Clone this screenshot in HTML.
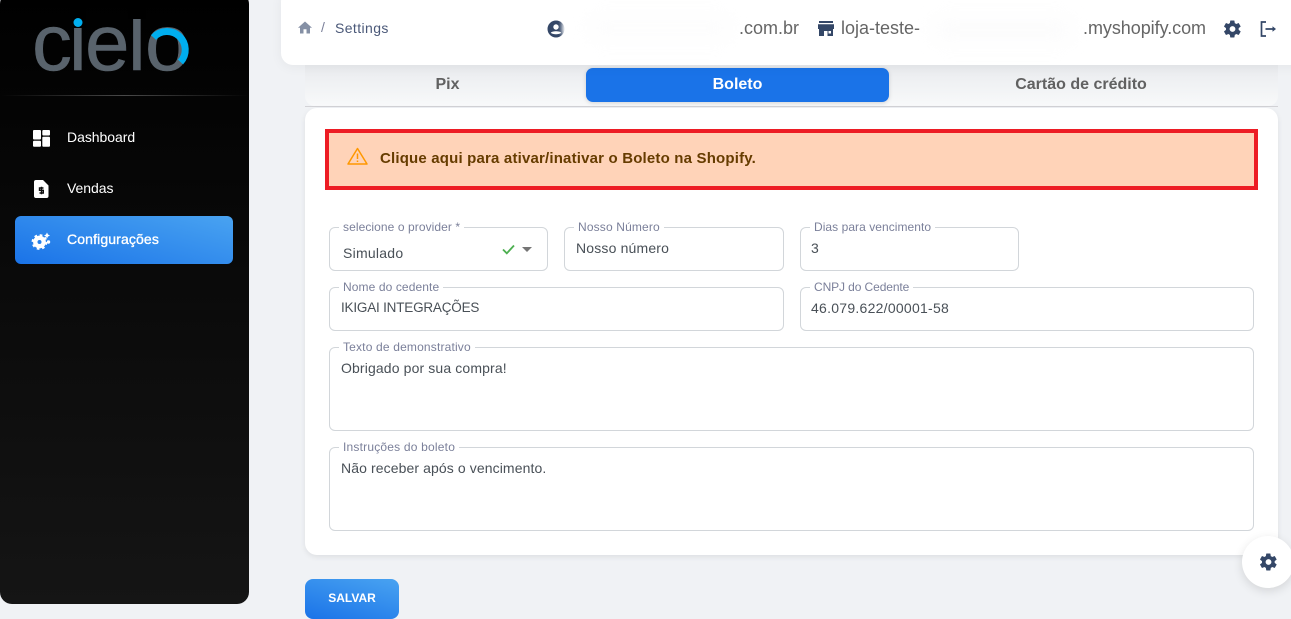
<!DOCTYPE html>
<html lang="pt-BR"><head><meta charset="utf-8"><title>Settings</title>
<style>
html,body{margin:0;padding:0;width:1291px;height:619px;overflow:hidden;background:#f0f2f5;font-family:"Liberation Sans",sans-serif}
.a{position:absolute;white-space:nowrap}
#side{left:0;top:-8px;width:249px;height:612px;border-radius:12px;background:linear-gradient(180deg,#000 0%,#151515 100%)}
#div{left:0;top:95px;width:249px;height:1px;background:linear-gradient(90deg,rgba(255,255,255,0),rgba(255,255,255,.28),rgba(255,255,255,0))}
.nav{color:#fff;font-size:14px;line-height:20px;left:67px;letter-spacing:-.04px}
#act{left:15px;top:216px;width:218px;height:48px;border-radius:6px;background:linear-gradient(195deg,#49a3f1,#1a73e8)}
#head{left:281px;top:-10px;width:1030px;height:75px;background:#fff;border-radius:12px;box-shadow:0 2px 12px rgba(0,0,0,.05);z-index:3}
.h{z-index:4}
#tabs{left:305px;top:65px;width:973px;height:41px;background:linear-gradient(180deg,#e9ebee,#f8f9fa);border-radius:0 0 10px 10px}
#line{left:305px;top:106px;width:973px;height:1px;background:#d2d2d6}
#on{left:586px;top:68px;width:303px;height:34px;border-radius:7px;background:#1a73e8;box-shadow:0 1px 4px rgba(0,0,0,.15)}
.tab{top:75px;line-height:19px;font-size:16px;font-weight:bold;color:#616161;transform:translateX(-50%)}
#card{left:305px;top:108px;width:973px;height:447px;background:#fff;border-radius:12px;box-shadow:0 2px 6px rgba(0,0,0,.08)}
#alert{left:325px;top:129px;width:925px;height:53px;border:4px solid #ed1c24;background:#ffd3b8}
#atxt{left:380px;top:150px;font-size:15px;line-height:18px;font-weight:bold;color:#663c00;letter-spacing:.18px}
.f{border:1px solid #d2d6da;border-radius:6px;box-sizing:border-box;background:#fff}
.l{font-size:12px;line-height:14px;color:#7b809a;background:#fff;padding:0 4px}
.v{font-size:14px;line-height:20px;color:#495057}
#save{left:305px;top:579px;width:94px;height:40px;border-radius:8px;background:linear-gradient(195deg,#49a3f1,#1a73e8);color:#fff;font-size:12px;font-weight:bold;line-height:38px;text-align:center}
#fab{left:1242px;top:536px;width:52px;height:52px;border-radius:50%;background:#fff;box-shadow:0 3px 10px rgba(0,0,0,.12)}
svg{position:absolute;display:block;overflow:visible}
</style></head><body>
<div class="a" id="side"></div>
<svg style="left:0;top:0;font-family:'Liberation Sans',sans-serif" width="249" height="90">
<g font-size="80" fill="#59636c" stroke="#59636c" stroke-width=".5">
<text x="32" y="70">c</text>
<text x="69" y="70">i</text>
<text x="85" y="70">e</text>
<text x="128" y="70">l</text>
<text x="145" y="70">o</text>
</g>
<rect x="70" y="8" width="16" height="20" fill="#000"/>
<rect x="128" y="8" width="18" height="11" fill="#000"/>
<circle cx="78" cy="22.500" r="4.500" fill="#00aeef"/>
<path d="M153.500 37.500A18 18 0 1 1 180.500 62" fill="none" stroke="#00aeef" stroke-width="7"/>
</svg>
<div class="a" id="div"></div>
<div class="a" id="act"></div>
<svg style="left:33px;top:130px" width="17" height="17" viewBox="0 0 17 17" fill="#fff"><rect width="8" height="9.500" rx="1"/><rect x="9.300" width="7.700" height="5.500" rx="1"/><rect y="10.800" width="8" height="6" rx="1"/><rect x="9.300" y="6.800" width="7.700" height="10" rx="1"/></svg>
<div class="a nav" style="top:127px">Dashboard</div>
<svg style="left:34px;top:180px" width="15" height="18" viewBox="0 0 15 18"><path d="M2 0H9L14.500 5.500V16A2 2 0 0 1 12.500 18H2A2 2 0 0 1 0 16V2A2 2 0 0 1 2 0Z" fill="#fff"/><path d="M9.500 8H5.500V10.300H9.300V13H5.500M7.500 6.800V14.200" fill="none" stroke="#111" stroke-width="1.400"/></svg>
<div class="a nav" style="top:178px">Vendas</div>
<svg style="left:32px;top:232px" width="19" height="18" viewBox="0 0 19 18" fill="#fff"><circle cx="7.500" cy="10" r="4.200" fill="none" stroke="#fff" stroke-width="4.400"/><circle cx="7.500" cy="10" r="7" fill="none" stroke="#fff" stroke-width="1.800" stroke-dasharray="2.700 2.800"/><path d="M15 0.500L16 2.500L18 3.500L16 4.500L15 6.500L14 4.500L12 3.500L14 2.500Z"/><circle cx="16.500" cy="10" r="1.700"/></svg>
<div class="a nav" style="top:229px;-webkit-text-stroke:.35px #fff;letter-spacing:.13px">Configurações</div>

<div class="a" id="tabs"></div>
<div class="a" id="line"></div>
<div class="a" id="on"></div>
<div class="a tab" style="left:447.500px">Pix</div>
<div class="a tab" style="left:737.500px;color:#fff">Boleto</div>
<div class="a tab" style="left:1081px">Cartão de crédito</div>

<div class="a" id="head"></div>
<svg class="h" style="left:298px;top:21px;z-index:4" width="14" height="13" viewBox="0 0 14 13"><path d="M5.500 12.500V8.300H8.500V12.500H12V6.800H14L7 .5 0 6.800H2V12.500Z" fill="#8590a5"/></svg>
<div class="a h" style="left:321px;top:18px;font-size:14px;line-height:18px;color:#7b809a">/</div>
<div class="a h" style="left:335px;top:19px;font-size:14px;line-height:18px;color:#4a5878;letter-spacing:.4px">Settings</div>
<svg style="left:547px;top:20px;z-index:4" width="18" height="18" viewBox="0 0 18 18"><circle cx="9" cy="9" r="8.500" fill="#344767"/><circle cx="9" cy="7" r="2.700" fill="#fff"/><path d="M3.800 12.800C5 10.800 13 10.800 14.200 12.800C12.500 14.800 5.500 14.800 3.800 12.800Z" fill="#fff"/></svg>
<div class="a h" style="left:562px;top:16px;width:8px;height:24px;background:#fff;filter:blur(2px);border-radius:50%;z-index:4"></div>
<div class="a h" style="left:590px;top:18px;width:140px;height:20px;background:#f7f7f8;filter:blur(10px);opacity:.35;z-index:4"></div>
<div class="a h" style="left:739px;top:18px;font-size:18px;line-height:21px;color:#666;z-index:4">.com.br</div>
<svg style="left:818px;top:21px;z-index:4" width="16" height="15" viewBox="0 0 16 15"><path d="M1 0H15V2H1ZM0 3.200H16L16 8H15V15H9.500V10H6V15H1V8H0ZM10.500 10V12.500H13V10Z" fill="#344767" fill-rule="evenodd"/></svg>
<div class="a h" style="left:841px;top:18px;font-size:18px;line-height:21px;color:#666;z-index:4">loja-teste-</div>
<div class="a h" style="left:935px;top:20px;width:135px;height:20px;background:#f4f4f5;filter:blur(10px);opacity:.35;z-index:4"></div>
<div class="a h" style="left:1083px;top:18px;font-size:18px;line-height:21px;color:#666;z-index:4;letter-spacing:-.05px">.myshopify.com</div>
<svg style="left:1224px;top:20px;z-index:4" width="17" height="18" viewBox="1.800 1.500 20.400 21"><path fill="#344767" d="M19.400 13c.04-.32.060-.66.060-1s-.02-.68-.07-1l2.160-1.680a.5.5 0 0 0 .12-.64l-2.050-3.540a.5.5 0 0 0-.62-.22l-2.550 1.020a7.500 7.500 0 0 0-1.730-1l-.38-2.710a.5.5 0 0 0-.5-.43H9.750a.5.500 0 0 0-.5.430l-.38 2.710c-.62.26-1.200.6-1.730 1L4.600 4.920a.5.500 0 0 0-.62.220L1.930 8.680a.5.500 0 0 0 .12.640L4.210 11c-.05.32-.08.67-.08 1s.02.68.07 1l-2.160 1.680a.5.500 0 0 0-.12.640l2.050 3.540c.13.23.4.31.62.220l2.550-1.020c.53.4 1.110.74 1.730 1l.38 2.710c.05.25.26.430.5.430h4.100c.25 0 .46-.18.5-.43l.38-2.710c.62-.26 1.200-.6 1.730-1l2.550 1.020c.23.090.49 0 .62-.22l2.050-3.540a.5.500 0 0 0-.12-.64ZM12 15.500a3.500 3.500 0 1 1 0-7 3.500 3.500 0 0 1 0 7Z"/></svg>
<svg style="left:1260px;top:21px;z-index:4" width="17" height="16" viewBox="0 0 17 16" fill="none" stroke="#344767" stroke-width="1.700"><path d="M6 1H1.500V15H6M5.500 8H14"/><path d="M12.500 5.300L16 8 12.500 10.700Z" fill="#344767" stroke="none"/></svg>

<div class="a" id="card"></div>
<div class="a" id="alert"></div>
<svg style="left:347px;top:147px" width="21" height="18" viewBox="0 0 21 18" fill="none" stroke="#ff9800" stroke-width="1.500"><path d="M10.500 1.500L20 17H1Z" stroke-linejoin="round"/><path d="M10.500 6.500V12M10.500 13.500V15"/></svg>
<div class="a" id="atxt">Clique aqui para ativar/inativar o Boleto na Shopify.</div>

<div class="a f" style="left:329px;top:227px;width:219px;height:44px"></div>
<div class="a l" style="left:339px;top:220px;letter-spacing:.08px">selecione o provider *</div>
<div class="a v" style="left:343px;top:243px;letter-spacing:.25px">Simulado</div>
<svg style="left:502px;top:244px" width="13" height="11" viewBox="0 0 13 11"><path d="M1 5.500L4.800 9.300 12 1.500" fill="none" stroke="#4caf50" stroke-width="1.800"/></svg>
<svg style="left:522px;top:247px" width="10" height="5" viewBox="0 0 10 5"><path d="M0 0H10L5 5Z" fill="#757575"/></svg>

<div class="a f" style="left:564px;top:227px;width:220px;height:44px"></div>
<div class="a l" style="left:574px;top:220px;letter-spacing:.15px">Nosso Número</div>
<div class="a v" style="left:576px;top:238px;letter-spacing:.17px">Nosso número</div>

<div class="a f" style="left:800px;top:227px;width:219px;height:44px"></div>
<div class="a l" style="left:810px;top:220px;letter-spacing:.05px">Dias para vencimento</div>
<div class="a v" style="left:811px;top:238px">3</div>

<div class="a f" style="left:329px;top:287px;width:455px;height:44px"></div>
<div class="a l" style="left:339px;top:280px;letter-spacing:.1px">Nome do cedente</div>
<div class="a v" style="left:341px;top:298px;font-size:13.500px;letter-spacing:-.2px">IKIGAI INTEGRAÇÕES</div>

<div class="a f" style="left:800px;top:287px;width:454px;height:44px"></div>
<div class="a l" style="left:810px;top:280px;letter-spacing:-.1px">CNPJ do Cedente</div>
<div class="a v" style="left:811px;top:298px;letter-spacing:.26px">46.079.622/00001-58</div>

<div class="a f" style="left:329px;top:347px;width:925px;height:84px"></div>
<div class="a l" style="left:339px;top:340px;letter-spacing:.17px">Texto de demonstrativo</div>
<div class="a v" style="left:341px;top:358px;letter-spacing:.13px">Obrigado por sua compra!</div>

<div class="a f" style="left:329px;top:447px;width:925px;height:84px"></div>
<div class="a l" style="left:339px;top:440px;letter-spacing:.2px">Instruções do boleto</div>
<div class="a v" style="left:341px;top:458px;letter-spacing:.1px">Não receber após o vencimento.</div>

<div class="a" id="save">SALVAR</div>
<div class="a" id="fab"></div>
<svg style="left:1260px;top:553px" width="17" height="18" viewBox="1.800 1.500 20.400 21"><path fill="#344767" d="M19.400 13c.04-.32.060-.66.060-1s-.02-.68-.07-1l2.160-1.680a.5.5 0 0 0 .12-.64l-2.050-3.540a.5.5 0 0 0-.62-.22l-2.550 1.020a7.500 7.500 0 0 0-1.730-1l-.38-2.710a.5.5 0 0 0-.5-.43H9.750a.5.500 0 0 0-.5.430l-.38 2.710c-.62.26-1.200.6-1.730 1L4.600 4.920a.5.500 0 0 0-.62.220L1.930 8.680a.5.500 0 0 0 .12.640L4.210 11c-.05.32-.08.67-.08 1s.02.68.07 1l-2.160 1.680a.5.500 0 0 0-.12.640l2.050 3.540c.13.23.4.31.62.220l2.550-1.020c.53.4 1.110.74 1.730 1l.38 2.710c.05.25.26.430.5.430h4.100c.25 0 .46-.18.5-.43l.38-2.710c.62-.26 1.200-.6 1.730-1l2.550 1.020c.23.090.49 0 .62-.22l2.050-3.540a.5.500 0 0 0-.12-.64ZM12 15.500a3.500 3.500 0 1 1 0-7 3.500 3.500 0 0 1 0 7Z"/></svg>
</body></html>
